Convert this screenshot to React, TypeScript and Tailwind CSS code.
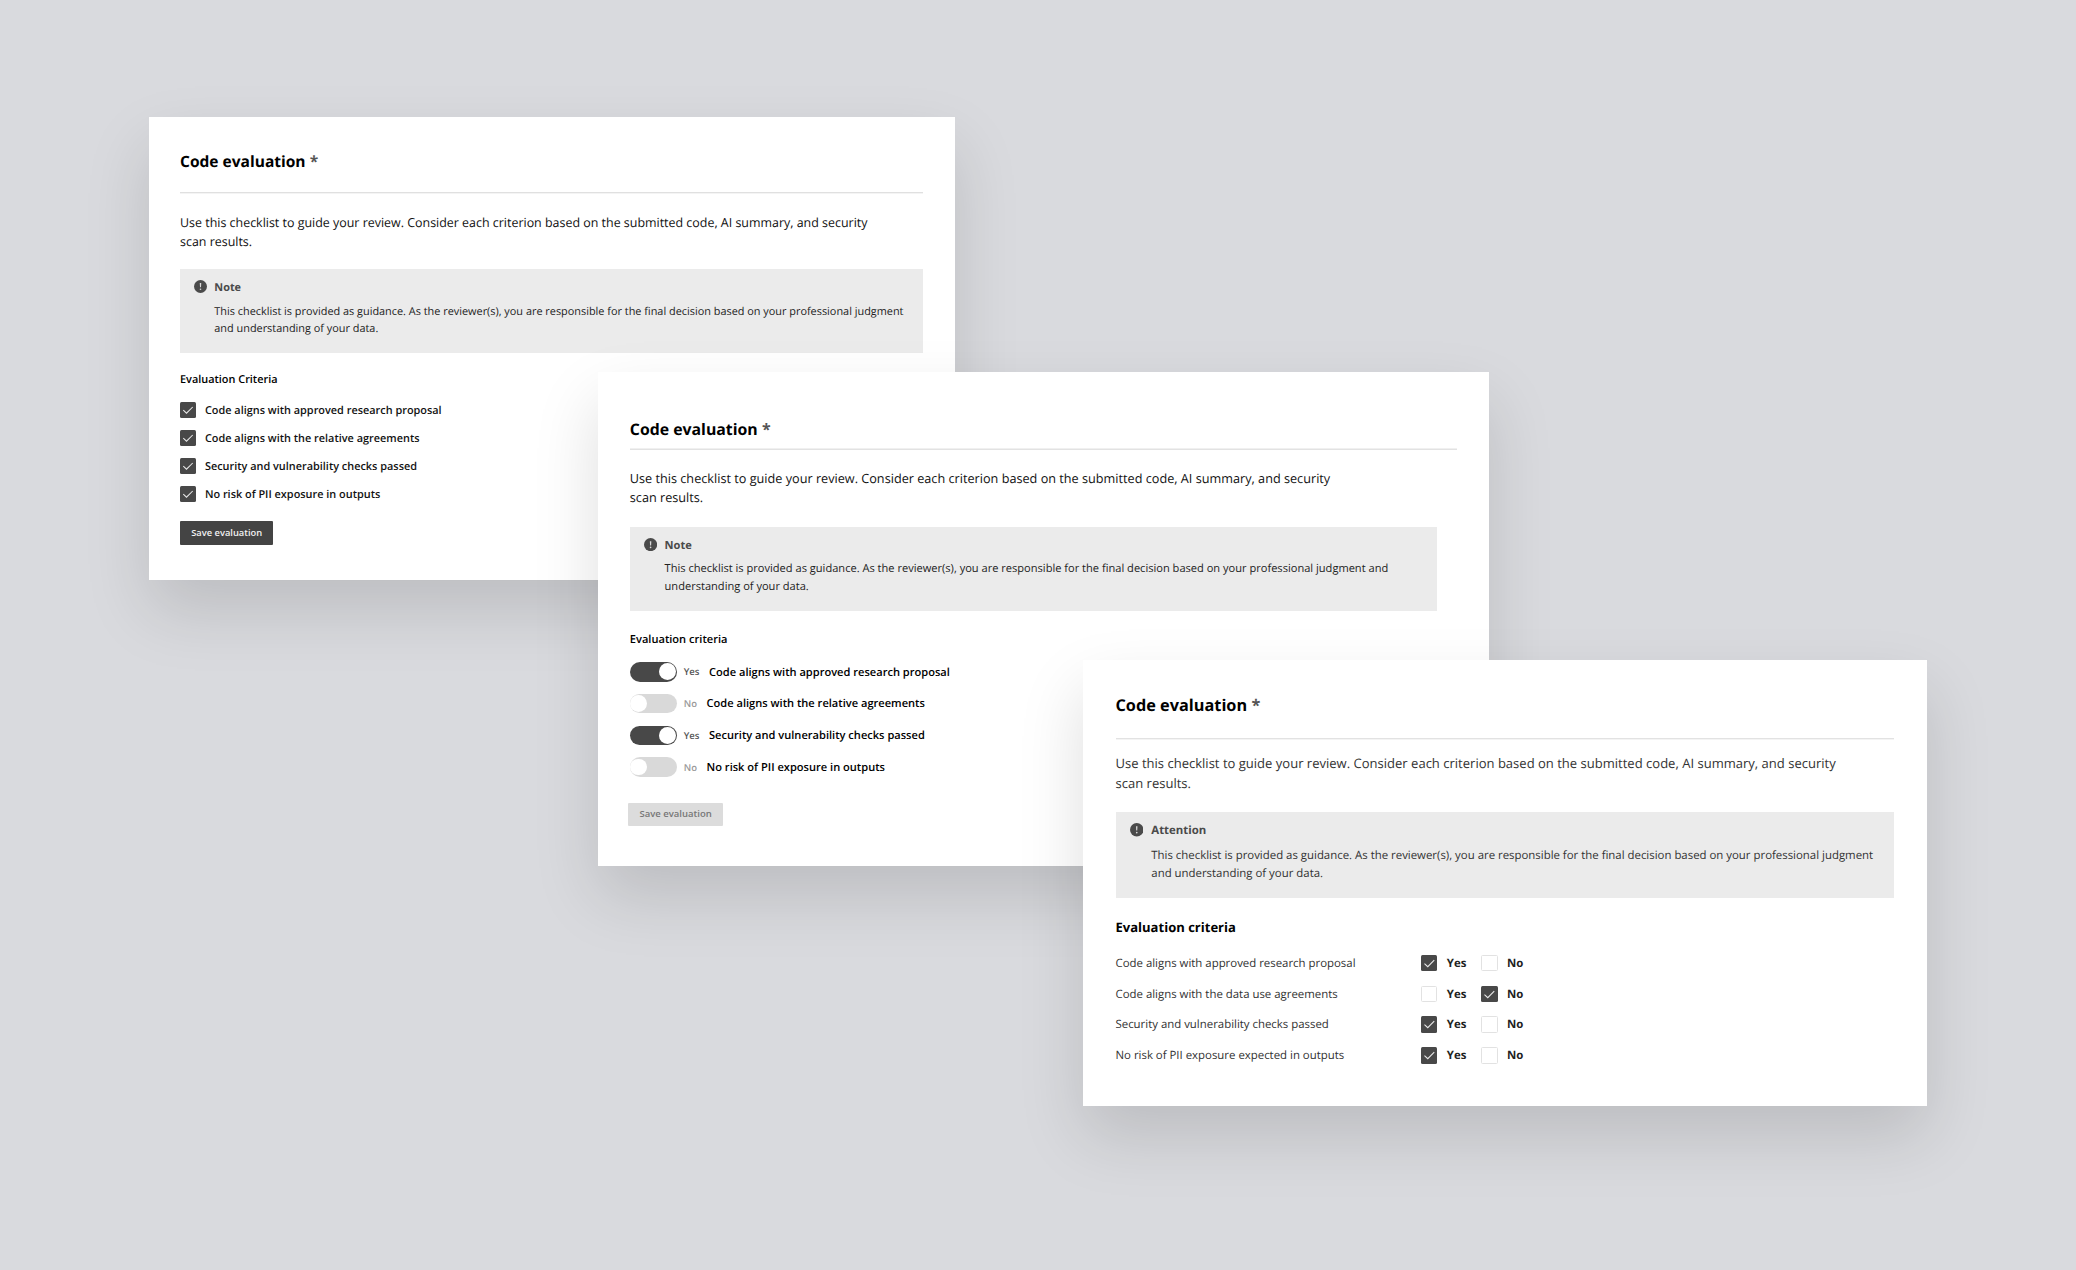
import clsx from "clsx";

const INTRO =
  "Use this checklist to guide your review. Consider each criterion based on the submitted code, AI summary, and security scan results.";
const GUIDANCE =
  "This checklist is provided as guidance. As the reviewer(s), you are responsible for the final decision based on your professional judgment and understanding of your data.";

const checklist = [
  "Code aligns with approved research proposal",
  "Code aligns with the relative agreements",
  "Security and vulnerability checks passed",
  "No risk of PII exposure in outputs",
];

const toggles = [
  { label: "Code aligns with approved research proposal", on: true },
  { label: "Code aligns with the relative agreements", on: false },
  { label: "Security and vulnerability checks passed", on: true },
  { label: "No risk of PII exposure in outputs", on: false },
];

const answers = [
  { label: "Code aligns with approved research proposal", yes: true },
  { label: "Code aligns with the data use agreements", yes: false },
  { label: "Security and vulnerability checks passed", yes: true },
  { label: "No risk of PII exposure expected in outputs", yes: true },
];

function AlertIcon({ className }: { className?: string }) {
  return (
    <svg viewBox="0 0 16 16" className={clsx("shrink-0", className)} aria-hidden="true">
      <circle cx="8" cy="8" r="8" fill="#4a4a4a" />
      <path d="M7.1 3.8h1.8l-.3 5.2H7.4z" fill="#d8d8d8" />
      <circle cx="8" cy="11.4" r="1" fill="#d8d8d8" />
    </svg>
  );
}

function Checkbox({ checked, className }: { checked: boolean; className?: string }) {
  return (
    <span
      role="checkbox"
      aria-checked={checked}
      className={clsx(
        "block shrink-0 rounded-[1.5px]",
        checked ? "bg-[#484848]" : "border border-[#e2e2e2] bg-white",
        className
      )}
    >
      {checked && (
        <svg viewBox="0 0 16 16" className="size-full" fill="none" aria-hidden="true">
          <path d="M3.3 8.2l3.2 3L12.7 5" stroke="#e8e8e8" strokeWidth="1.05" />
        </svg>
      )}
    </span>
  );
}

function Toggle({ on }: { on: boolean }) {
  return (
    <span
      role="switch"
      aria-checked={on}
      className={clsx(
        "flex h-[19.4px] w-[47.4px] shrink-0 items-center rounded-full",
        on ? "justify-end bg-[#484848] pr-[1.2px]" : "justify-start bg-[#d9d9d9] pl-[0.7px]"
      )}
    >
      <span className="size-[16.8px] rounded-full bg-white" />
    </span>
  );
}

function Star() {
  return <span className="text-[#555]">*</span>;
}

const cardBase = "absolute bg-white shadow-[0_30px_62px_rgba(0,0,0,0.135)]";

function CheckboxCard() {
  return (
    <section className={clsx(cardBase, "left-[149px] top-[117px] h-[463px] w-[806px] pl-[31px] pr-[31.6px] pt-[34px]")}>
      <h2 className="text-[15.54px] font-bold leading-[20px]">
        Code evaluation <Star />
      </h2>
      <div className="mt-[21px] h-[2px] border-b border-t border-b-[#f4f4f4] border-t-[#e0e0e0]" />
      <p className="mt-[19px] w-[700px] text-[12.45px] leading-[19.4px] text-[#111]">{INTRO}</p>
      <div className="mt-[17.2px] flex h-[83.7px] bg-[#ebebeb] pl-[14px] pt-[10px]">
        <AlertIcon className="mt-px size-[13px]" />
        <div className="ml-[7.3px]">
          <h3 className="text-[10.9px] font-bold leading-[17px] text-[#4a4a4a]">Note</h3>
          <p className="mt-[6.8px] w-[700px] text-[10.9px] leading-[17px] text-[#222]">{GUIDANCE}</p>
        </div>
      </div>
      <h3 className="mt-[19.2px] text-[10.9px] font-semibold leading-[16px]">Evaluation Criteria</h3>
      <ul className="mt-[14.1px] flex flex-col gap-3">
        {checklist.map((item) => (
          <li key={item} className="flex h-4 items-center">
            <Checkbox checked className="size-4" />
            <span className="ml-[8.9px] mt-[1.6px] text-[10.9px] font-semibold leading-[16px] text-[#111]">{item}</span>
          </li>
        ))}
      </ul>
      <button className="mt-[19.5px] block h-[23.4px] w-[93.4px] rounded-[1px] bg-[#444] text-[9.33px] font-semibold leading-[23.4px] text-[#f2f2f2]">
        Save evaluation
      </button>
    </section>
  );
}

function ToggleCard() {
  return (
    <section className={clsx(cardBase, "left-[598px] top-[372px] h-[494px] w-[891px] pl-[31.8px] pr-[32px] pt-[47.3px]")}>
      <h2 className="text-[15.84px] font-bold leading-[20px]">
        Code evaluation <Star />
      </h2>
      <div className="mt-[8.7px] h-[2px] border-b border-t border-b-[#e2e2e2] border-t-[#f0f0f0]" />
      <p className="mt-[18.6px] w-[715px] text-[12.68px] leading-[19px] text-[#111]">{INTRO}</p>
      <div className="mt-[20.1px] flex h-[84.3px] w-[807.5px] bg-[#ebebeb] pl-[14px] pt-[10px]">
        <AlertIcon className="mt-px size-[13.2px]" />
        <div className="ml-[7.6px] mt-[1.3px]">
          <h3 className="text-[11.09px] font-bold leading-[16px] text-[#4a4a4a]">Note</h3>
          <p className="mt-[6.2px] w-[740px] text-[11.09px] leading-[17.5px] text-[#222]">{GUIDANCE}</p>
        </div>
      </div>
      <h3 className="mt-[21.3px] text-[11.09px] font-semibold leading-[16px]">Evaluation criteria</h3>
      <ul className="mt-[13.9px] flex flex-col gap-[12.3px]">
        {toggles.map(({ label, on }) => (
          <li key={label} className="flex h-[19.4px] items-center">
            <Toggle on={on} />
            <span className={clsx("ml-[6.5px] mt-[1.2px] text-[9.5px] font-semibold leading-[16px]", on ? "text-[#555]" : "text-[#999]")}>
              {on ? "Yes" : "No"}
            </span>
            <span className="ml-[9.6px] mt-[1.6px] text-[11.08px] font-semibold leading-[16px]">{label}</span>
          </li>
        ))}
      </ul>
      <button className="-ml-[1.5px] mt-[26px] block h-[23.6px] w-[94.6px] rounded-[1px] bg-[#dcdcdc] text-[9.5px] font-semibold leading-[22.4px] text-[#777]">
        Save evaluation
      </button>
    </section>
  );
}

function YesNoCard() {
  return (
    <section className={clsx(cardBase, "left-[1083px] top-[660px] h-[445.7px] w-[844px] pl-[32.5px] pr-[32.6px] pt-[35px]")}>
      <h2 className="text-[16.3px] font-bold leading-[20px]">
        Code evaluation <Star />
      </h2>
      <div className="mt-[23px] h-[2px] border-b border-t border-b-[#f4f4f4] border-t-[#e2e2e2]" />
      <p className="mt-[12.8px] w-[735px] text-[13.04px] leading-[20px] text-[#333]">{INTRO}</p>
      <div className="mt-[18.9px] flex h-[86.3px] bg-[#ebebeb] pl-[14.3px] pt-[10.6px]">
        <AlertIcon className="mt-px size-[13.5px]" />
        <div className="ml-[8px] mt-[0.8px]">
          <h3 className="text-[11.41px] font-bold leading-[16px] text-[#4a4a4a]">Attention</h3>
          <p className="mt-[7.8px] w-[735px] text-[11.41px] leading-[17.7px] text-[#333]">{GUIDANCE}</p>
        </div>
      </div>
      <h3 className="mt-[20px] text-[13.04px] font-bold leading-[18px]">Evaluation criteria</h3>
      <ul className="mt-[18.7px] flex flex-col gap-[14px]">
        {answers.map(({ label, yes }) => (
          <li key={label} className="flex h-[16.8px] items-center text-[11.41px] leading-[16px]">
            <span className="mt-[1.6px] w-[305.3px] text-[#333]">{label}</span>
            <Checkbox checked={yes} className="size-[16.7px]" />
            <span className="ml-[9.3px] mt-[1.6px] w-[34.3px] font-bold text-[#222]">Yes</span>
            <Checkbox checked={!yes} className="size-[16.7px]" />
            <span className="ml-[9.3px] mt-[1.6px] font-bold text-[#222]">No</span>
          </li>
        ))}
      </ul>
    </section>
  );
}

export default function App() {
  return (
    <main className="relative h-[1270px] w-[2076px] overflow-hidden bg-[#d9dade] font-['Open_Sans',sans-serif] text-black [text-rendering:geometricPrecision]">
      <CheckboxCard />
      <ToggleCard />
      <YesNoCard />
    </main>
  );
}
